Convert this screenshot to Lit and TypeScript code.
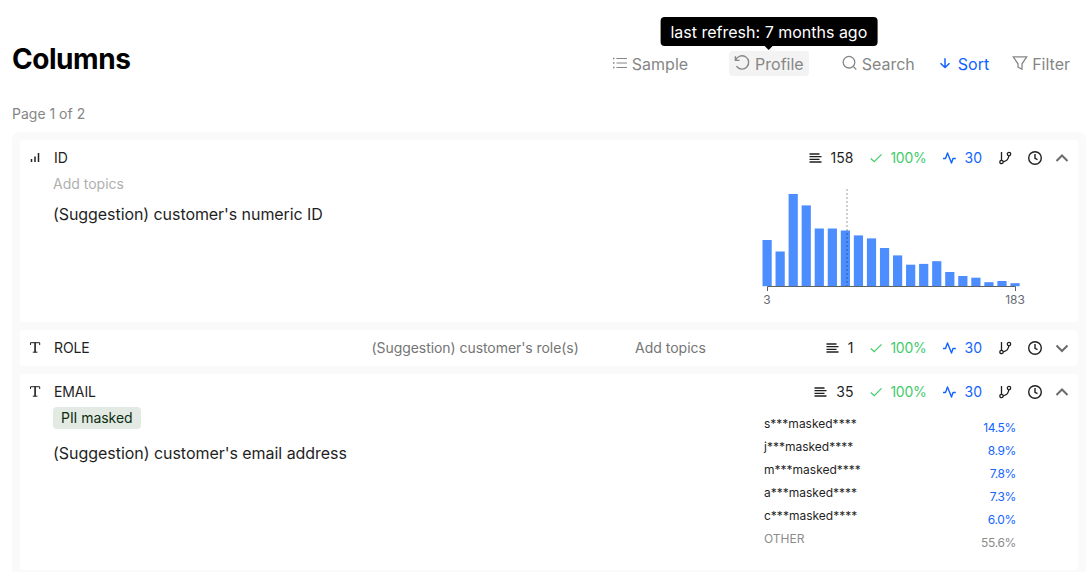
import { LitElement, html, svg, css, nothing } from "lit";
import { customElement, property } from "lit/decorators.js";

const ICONS: Record<string, any> = {
  list: svg`<path d="M4.500 3.500H15M4.500 8H15M4.500 12.500H15" stroke-width="1.200"/><path d="M1 3.500H2.500M1 8H2.500M1 12.500H2.500" stroke-width="1.300"/>`,
  undo: svg`<path d="M1.300 2.200V6H5.200M1.600 5.700A6.300 6.300 0 1 1 2.300 11.500" stroke-width="1.300"/>`,
  search: svg`<circle cx="7" cy="7.200" r="5.800" stroke-width="1.300"/><path d="M11.200 11.400L14.300 14.500" stroke-width="1.300"/>`,
  down: svg`<path d="M8 2.500V13M2.800 8.200L8 13.200L13.200 8.200" stroke-width="1.700"/>`,
  filter: svg`<path d="M1.300 1.900H14.700L10 8.800V14.200L6 12V8.800Z" stroke-width="1.300"/>`,
  check: svg`<path d="M2 8.600L6 12.200L14.300 3.900" stroke-width="1.400"/>`,
};

const icon = (name: string, size: number) =>
  html`<svg width=${size} height=${size} viewBox="0 0 16 16" fill="none" stroke="currentColor">${ICONS[name]}</svg>`;

interface Column {
  name: string;
  type: "number" | "text";
  distinct: string;
  open: boolean;
  description: string;
  tag?: string;
}

const COLUMNS: Column[] = [
  { name: "ID", type: "number", distinct: "158", open: true, description: "(Suggestion) customer's numeric ID" },
  { name: "ROLE", type: "text", distinct: "1", open: false, description: "(Suggestion) customer's role(s)" },
  { name: "EMAIL", type: "text", distinct: "35", open: true, description: "(Suggestion) customer's email address", tag: "PII masked" },
];

const BARS = [46.2, 34.7, 92.2, 80.8, 57.7, 57.7, 55.7, 50.8, 47.8, 38.2, 30.8, 21.5, 22.3, 25, 14.2, 10.2, 8.5, 4, 5.2, 3];

const VALUES: [string, string][] = [
  ["s***masked****", "14.5%"],
  ["j***masked****", "8.9%"],
  ["m***masked****", "7.8%"],
  ["a***masked****", "7.3%"],
  ["c***masked****", "6.0%"],
  ["OTHER", "55.6%"],
];

@customElement("column-histogram")
export class ColumnHistogram extends LitElement {
  static styles = css`
    :host { display: block; }
    svg { display: block; }
    .label { font: 12px Inter, sans-serif; fill: #666a73; text-anchor: middle; }
  `;
  render() {
    return html`<svg width="272" height="124" viewBox="0 0 272 124">
      ${BARS.map((h, i) => svg`<rect x=${6.5 + i * 13.05} y=${102.2 - h} width="9.2" height=${h} fill="#4c8dff"/>`)}
      <path d="M91 5V102" stroke="#000" stroke-opacity=".25" stroke-width="1.500" stroke-dasharray="2 2"/>
      <path d="M11.500 107V102.500H259.500V107" fill="none" stroke="#5c6068"/>
      <text class="label" x="11" y="120">3</text>
      <text class="label" x="259" y="120">183</text>
    </svg>`;
  }
}

@customElement("column-card")
export class ColumnCard extends LitElement {
  @property({ attribute: false }) column!: Column;

  static styles = css`
    :host { display: block; background: #fff; border-radius: 4px; color: #1f1f1f; font-size: 14px; }
    svg { display: block; flex: none; }
    .head { display: flex; align-items: center; height: 36px; padding: 0 9px 0 8px; line-height: 16px; }
    .kind { width: 26px; flex: none; }
    .name { width: 317.5px; flex: none; letter-spacing: -.1px; }
    .name, .brief, .topics { padding-bottom: 1px; }
    .brief { width: 263.5px; flex: none; color: #757575; letter-spacing: -.06px; }
    .topics { color: #757575; }
    .stats { display: flex; align-items: center; margin-left: auto; }
    .stats span { padding-bottom: 1px; }
    .count { margin: 0 16px 0 8px; }
    .good { color: #43cb6b; display: flex; align-items: center; gap: 7px; margin-right: 15px; letter-spacing: -.25px; }
    .usage { color: #1464ff; display: flex; align-items: center; gap: 9px; margin-right: 16px; }
    .branch { margin-right: 15px; }
    .clock { margin-right: 12px; }
    .body { display: flex; justify-content: space-between; }
    .info { padding-left: 33px; }
    .add { color: #b0b0b0; line-height: 16px; }
    .tag { display: block; width: fit-content; line-height: 22px; padding: 0 8px; background: #e3e9e3; border-radius: 4px; color: #0b2e10; letter-spacing: -.05px; }
    .desc { font-size: 16px; line-height: 24px; letter-spacing: -.07px; }
    .number .add { margin-bottom: 10px; }
    .number .desc { padding-bottom: 96px; }
    .text .tag { margin: -3px 0 12px; }
    .text .desc { letter-spacing: -.04px; }
    .number .chart { margin: 8px 50px 0 0; }
    .values { width: 252px; margin: 2px 62px 0 0; padding-bottom: 20px; font-size: 12px; }
    .value { display: flex; justify-content: space-between; height: 23px; line-height: 23px; }
    .value .share { color: #1464ff; padding-top: 4px; letter-spacing: -.35px; }
    .value:last-child, .value:last-child .share { color: #8c8c8c; }
  `;

  kind() {
    return this.column.type === "number"
      ? html`<svg width="14" height="14" viewBox="0 0 14 14"><path d="M3.500 8V11M7 5.500V11M10.500 2V11" fill="none" stroke="#222" stroke-width="1.500"/></svg>`
      : html`<svg width="14" height="14" viewBox="0 0 14 14"><path d="M2.500 4V1.700H11.700V4M7.100 1.700V11.200M4.800 11.200H9.400" fill="none" stroke="#222" stroke-width="1"/><path d="M7.100 1.700V11.200" stroke="#222" stroke-width="1.300"/></svg>`;
  }

  render() {
    const c = this.column;
    return html`
      <div class="head">
        <div class="kind">${this.kind()}</div>
        <div class="name">${c.name}</div>
        ${c.open ? nothing : html`<div class="brief">${c.description}</div><div class="topics">Add topics</div>`}
        <div class="stats">
          <svg width="14" height="14" viewBox="0 0 14 14"><path d="M.5 3H10.500M.5 5.700H12.500M.5 8.400H10.500M.5 11H12.500" stroke="#1f1f1f" stroke-width="1.300"/></svg>
          <span class="count">${c.distinct}</span>
          <span class="good">${icon("check", 14)}100%</span>
          <span class="usage"><svg width="14" height="14" viewBox="0 0 14 14"><path d="M1 7.500H3.500L5.500 2l4 10 1.500-4.500H13.800" fill="none" stroke="currentColor" stroke-width="1.400" stroke-linejoin="round"/></svg>30</span>
          <svg class="branch" width="14" height="14" viewBox="0 0 14 14" fill="none" stroke="#1f1f1f" stroke-width="1.300"><path d="M3.500 1V9.200M10.800 4.800C10.500 8 8 10.300 5.200 10.800"/><circle cx="3.500" cy="11" r="1.700"/><circle cx="11" cy="3.100" r="1.700"/></svg>
          <svg class="clock" width="16" height="16" viewBox="0 0 16 16" fill="none" stroke="#1f1f1f" stroke-width="1.400"><circle cx="8" cy="8" r="6.300"/><path d="M8 4V8.300L10.500 9.700"/></svg>
          <svg width="14" height="14" viewBox="0 0 14 14"><path d=${c.open ? "M1.500 10L7 4.500L12.500 10" : "M1.500 4.500L7 10L12.500 4.500"} fill="none" stroke="#6b6b6b" stroke-width="2"/></svg>
        </div>
      </div>
      ${c.open
        ? html`<div class="body ${c.type}">
            <div class="info">
              ${c.tag ? html`<div class="tag">${c.tag}</div>` : html`<div class="add">Add topics</div>`}
              <div class="desc">${c.description}</div>
            </div>
            ${c.type === "number"
              ? html`<column-histogram class="chart"></column-histogram>`
              : html`<div class="values">
                  ${VALUES.map(([v, s]) => html`<div class="value"><span>${v}</span><span class="share">${s}</span></div>`)}
                </div>`}
          </div>`
        : nothing}
    `;
  }
}

@customElement("app-root")
export class AppRoot extends LitElement {
  static styles = css`
    :host { display: block; box-sizing: border-box; height: 572px; overflow: hidden; background: #fff; padding: 40px 6px 0 12px; font-family: Inter, sans-serif; }
    svg { display: block; flex: none; }
    .top { display: flex; align-items: center; justify-content: space-between; height: 37px; }
    h1 { margin: 0; font-size: 28px; font-weight: 700; line-height: 36px; color: #000; letter-spacing: -.45px; }
    .tools { display: flex; align-items: center; padding: 10px 16px 0 0; font-size: 16px; line-height: 23px; color: #868686; }
    .tool { display: flex; align-items: center; gap: 4px; padding-top: 2px; }
    .tool svg { position: relative; top: -2px; }
    .profile { position: relative; margin: 0 33px 0 41px; padding: 2px 5px 0 5px; background: #f3f3f3; border-radius: 4px; }
    .sort { color: #0f62fe; margin: 0 23px 0 23px; gap: 6px; }
    .tip { position: absolute; left: 50%; bottom: 30px; transform: translateX(-50%); padding: 4px 10px 2px; background: #000; color: #fff; border-radius: 4px; white-space: nowrap; }
    .tip::after { content: ""; position: absolute; left: 50%; top: 100%; margin-left: -4px; border: 4px solid transparent; border-top-color: #000; }
    .page { margin-top: 28px; font-size: 14px; line-height: 18px; color: #868686; }
    .panel { display: flex; flex-direction: column; gap: 8px; margin-top: 9px; padding: 8px; background: #fafafa; border-radius: 8px; }
  `;
  render() {
    return html`
      <div class="top">
        <h1>Columns</h1>
        <div class="tools">
          <div class="tool">${icon("list", 16)}Sample</div>
          <div class="tool profile">${icon("undo", 17)}Profile<div class="tip">last refresh: 7 months ago</div></div>
          <div class="tool">${icon("search", 16)}Search</div>
          <div class="tool sort">${icon("down", 14)}Sort</div>
          <div class="tool">${icon("filter", 16)}Filter</div>
        </div>
      </div>
      <div class="page">Page 1 of 2</div>
      <div class="panel">${COLUMNS.map((c) => html`<column-card .column=${c}></column-card>`)}</div>
    `;
  }
}
